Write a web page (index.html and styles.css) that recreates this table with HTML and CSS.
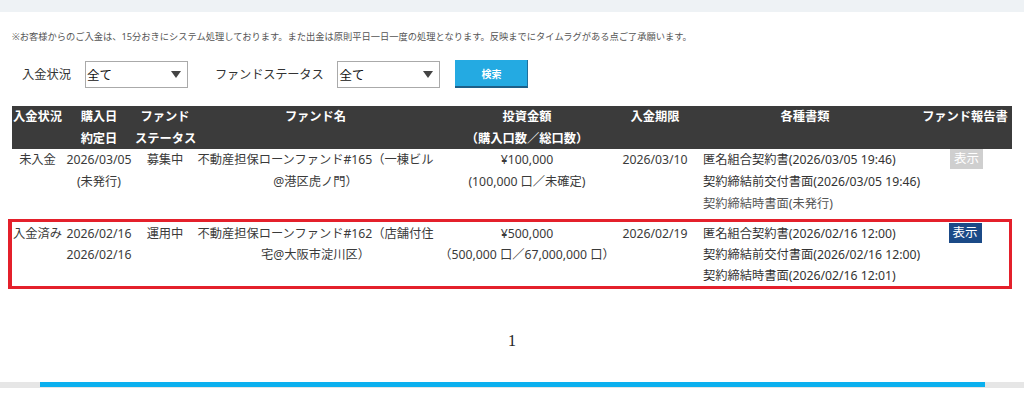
FILE: index.html
```html
<!DOCTYPE html>
<html lang="ja">
<head>
<meta charset="utf-8">
<title>入金状況</title>
<link rel="stylesheet" href="styles.css">
</head>
<body>
<div class="topbar"></div>
<div class="content">
  <p class="note">※お客様からのご入金は、15分おきにシステム処理しております。また出金は原則平日一日一度の処理となります。反映までにタイムラグがある点ご了承願います。</p>
  <div class="filters">
    <span class="flabel">入金状況</span>
    <div class="fselect"><span>全て</span><svg class="arrow" width="10" height="7" viewBox="0 0 10 7"><path d="M0 0H10L5 7Z" fill="#444"/></svg></div>
    <span class="flabel flabel-2">ファンドステータス</span>
    <div class="fselect"><span>全て</span><svg class="arrow" width="10" height="7" viewBox="0 0 10 7"><path d="M0 0H10L5 7Z" fill="#444"/></svg></div>
    <button class="search">検索</button>
  </div>
  <table class="list">
    <colgroup>
      <col class="c1"><col class="c2"><col class="c3"><col class="c4"><col class="c5"><col class="c6"><col class="c7"><col class="c8">
    </colgroup>
    <thead>
      <tr>
        <th>入金状況</th>
        <th>購入日<br>約定日</th>
        <th>ファンド<br>ステータス</th>
        <th>ファンド名</th>
        <th>投資金額<br>（購入口数／総口数）</th>
        <th>入金期限</th>
        <th>各種書類</th>
        <th>ファンド報告書</th>
      </tr>
    </thead>
    <tbody>
      <tr class="row">
        <td>未入金</td>
        <td>2026/03/05<br>(未発行)</td>
        <td>募集中</td>
        <td class="name">不動産担保ローンファンド#165（一棟ビル<br>@港区虎ノ門）</td>
        <td>¥100,000<br>(100,000 口／未確定)</td>
        <td>2026/03/10</td>
        <td class="docs">匿名組合契約書(2026/03/05 19:46)<br>契約締結前交付書面(2026/03/05 19:46)<br><span class="pending">契約締結時書面(未発行)</span></td>
        <td><span class="show disabled">表示</span></td>
      </tr>
      <tr class="row hl">
        <td>入金済み</td>
        <td>2026/02/16<br>2026/02/16</td>
        <td>運用中</td>
        <td class="name">不動産担保ローンファンド#162（店舗付住<br>宅@大阪市淀川区）</td>
        <td>¥500,000<br>（500,000 口／67,000,000 口）</td>
        <td>2026/02/19</td>
        <td class="docs">匿名組合契約書(2026/02/16 12:00)<br>契約締結前交付書面(2026/02/16 12:00)<br>契約締結時書面(2026/02/16 12:01)</td>
        <td><span class="show">表示</span></td>
      </tr>
    </tbody>
  </table>
  <div class="pager">1</div>
</div>
<div class="bottom"><div class="progress"></div></div>
</body>
</html>
```
FILE: styles.css
```css
html, body {
  margin: 0;
  padding: 0;
  background: #fff;
}
body {
  font-family: "Noto Sans", "Noto Sans CJK JP", sans-serif;
  color: #333;
  height: 397px;
  overflow: hidden;
}
.topbar {
  height: 12px;
  background: #eef2f5;
}
.content {
  padding: 0 12px;
}
.note {
  margin: 19px 0 0;
  font-size: 9.25px;
  line-height: 12px;
  color: #555;
  white-space: nowrap;
}
.filters {
  display: flex;
  align-items: center;
  height: 28px;
  margin-top: 17px;
  padding-left: 10px;
}
.flabel {
  font-size: 12.25px;
  color: #333;
  margin-right: 14px;
}
.flabel-2 {
  margin-left: 27px;
  margin-right: 14px;
  letter-spacing: -0.2px;
}
.fselect {
  box-sizing: border-box;
  width: 103px;
  height: 27px;
  margin-top: 1px;
  border: 1px solid #aaa;
  background: #fff;
  display: flex;
  align-items: center;
  justify-content: space-between;
  padding: 0 6px 0 1px;
  font-size: 12.5px;
  color: #111;
}
.arrow {
  display: block;
}
.search {
  box-sizing: border-box;
  width: 73px;
  height: 28px;
  margin-left: 15px;
  border: none;
  border-right: 1px solid #1f6f9c;
  border-bottom: 2px solid #1d5f88;
  background: #24aae2;
  color: #fff;
  font-family: "Noto Sans CJK JP", sans-serif;
  font-weight: bold;
  font-size: 10px;
  padding: 0;
}
.list {
  margin-top: 18px;
  width: 1000px;
  table-layout: fixed;
  border-collapse: separate;
  border-spacing: 0;
  font-size: 12.25px;
}
.c1 { width: 51px; }
.c2 { width: 72px; }
.c3 { width: 60px; }
.c4 { width: 241px; }
.c5 { width: 182px; }
.c6 { width: 74px; }
.c7 { width: 226px; }
.c8 { width: 94px; }
.list th {
  background: #3b3b3b;
  color: #fff;
  font-weight: bold;
  line-height: 21.5px;
  padding: 0;
  vertical-align: top;
  text-align: center;
  white-space: nowrap;
}
.list td {
  padding: 0 0 4px;
  line-height: 22px;
  vertical-align: top;
  text-align: center;
  white-space: nowrap;
  color: #3a3a3a;
}
.list td.docs {
  text-align: left;
  padding-left: 11px;
  color: #333;
}
.pending {
  color: #555;
}
.list tr.hl td {
  padding-top: 1px;
  padding-bottom: 0;
  line-height: 21px;
  border-top: 3px solid #e4202b;
  border-bottom: 3px solid #e4202b;
}
.list tr.hl td:first-child {
  box-shadow: -4px 0 0 #e4202b;
}
.list tr.hl td:last-child {
  border-right: 3px solid #e4202b;
}
.show {
  display: inline-block;
  width: 33px;
  height: 20px;
  margin-left: 3px;
  line-height: 20px;
  font-size: 12.5px;
  color: #fff;
  background: #1b4a87;
  text-align: center;
  vertical-align: top;
}
.show.disabled {
  background: #cfcfcf;
}
.pager {
  margin-top: 42px;
  text-align: center;
  font-family: "Liberation Serif", serif;
  font-size: 16px;
  line-height: 20px;
  color: #222;
}
.bottom {
  margin-top: 31px;
  height: 6px;
  background: #e6e6e6;
  padding: 0 39px 0 40px;
}
.progress {
  height: 5px;
  background: #0bb0ef;
}
```
